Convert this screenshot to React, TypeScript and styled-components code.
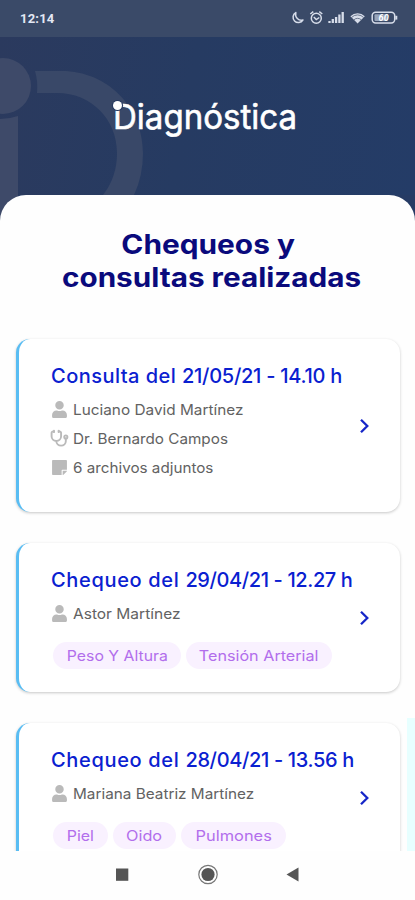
import React from "react";
import styled, { createGlobalStyle } from "styled-components";
import { FaUser, FaStickyNote } from "react-icons/fa";
import { Stethoscope } from "lucide-react";

const GlobalStyle = createGlobalStyle`
  * { box-sizing: border-box; }
  body { margin: 0; background: #fff; font-family: Inter, "Liberation Sans", sans-serif; }
`;

const Screen = styled.div`
  width: 415px;
  height: 900px;
  display: flex;
  flex-direction: column;
  overflow: hidden;
  background: #263b64;
`;

const StatusBar = styled.header`
  flex: none;
  height: 37px;
  padding: 0 17px 1px 20px;
  display: flex;
  align-items: center;
  justify-content: space-between;
  background: #3a4a68;
  color: #e3e8f4;
  font: 700 13px Roboto, sans-serif;
  letter-spacing: 0.2px;
`;

const Hero = styled.div`
  position: relative;
  flex: none;
  height: 158px;
  display: flex;
  justify-content: center;
  padding: 58px 7px 0 0;
  background: linear-gradient(100deg, #2b3a5e 0%, #263b62 45%, #243c67 100%);
`;

const Watermark = styled.svg`
  position: absolute;
  left: 0;
  top: 0;
`;

const Brand = styled.div`
  position: relative;
  width: 183px;
  height: 44px;
`;

const BrandName = styled.div`
  font-size: 34px;
  line-height: 44px;
  font-weight: 400;
  color: #fff;
  -webkit-text-stroke: 0.6px #fff;
  white-space: nowrap;
  transform: scaleX(0.972);
  transform-origin: left;
`;

const BrandDot = styled.i`
  position: absolute;
  left: 0;
  top: 6px;
  width: 9px;
  height: 9px;
  border-radius: 50%;
  background: #fff;
  box-shadow: 0 0 0 1.1px #273b61;
`;

const SheetBack = styled.div`
  flex: 1;
  min-height: 0;
  display: flex;
  flex-direction: column;
  background: linear-gradient(90deg, #3e4a69 0 18px, #263b64 18px);
`;

const Sheet = styled.main`
  position: relative;
  flex: 1;
  min-height: 0;
  overflow: hidden;
  padding: 33px 15px 0 16px;
  border-radius: 26px 26px 0 0;
  background: #fefefe;
`;

const Heading = styled.h1`
  margin: 0 0 46px;
  display: flex;
  flex-direction: column;
  align-items: center;
  color: #0a0a7c;
  font-size: 26.5px;
  font-weight: 700;
  line-height: 32.5px;
`;

const HeadingLine = styled.span<{ $indent?: number }>`
  padding-left: ${(p) => p.$indent ?? 0}px;
`;

const Stretch = styled.span<{ $x: number; $center?: boolean }>`
  display: inline-block;
  white-space: nowrap;
  transform: scaleX(${(p) => p.$x});
  transform-origin: ${(p) => (p.$center ? "center" : "left")};
`;

const Card = styled.article<{ $h: number }>`
  position: relative;
  height: ${(p) => p.$h}px;
  margin-bottom: 31px;
  padding: 24px 28px 0 32px;
  display: flex;
  justify-content: space-between;
  border-left: 3px solid #59bdf3;
  border-radius: 14px;
  background: #fff;
  box-shadow: 0 1px 3px rgba(0, 0, 0, 0.22);
`;

const CardTitle = styled.h2`
  margin: 0 0 8px;
  height: 26px;
  line-height: 26px;
  color: #0a20d0;
  font-size: 20px;
  font-weight: 500;
  white-space: pre;
`;

const Tracked = styled.span<{ $tracking: number }>`
  letter-spacing: ${(p) => p.$tracking}px;
`;

const Info = styled.div`
  display: flex;
  align-items: center;
  gap: 5px;
  height: 28.8px;
  margin-top: -1.5px;
  margin-bottom: 1.5px;
  color: #626262;
  font-size: 14.5px;
  svg { flex: none; width: 17px; height: 17px; color: #bababa; }
  .lucide { width: 19px; height: 19px; margin: 0 -1px; stroke-width: 2.4px; }
`;

const Tags = styled.div`
  display: flex;
  gap: 5px;
  margin: 13.5px 0 0 2px;
`;

const Tag = styled.span<{ $w: number }>`
  width: ${(p) => p.$w}px;
  height: 27px;
  line-height: 27px;
  text-align: center;
  border-radius: 14px;
  background: #f9f1ff;
  color: #b26eec;
  font-size: 14.5px;
`;

const Arrow = styled.svg<{ $top: number }>`
  flex: none;
  width: 12px;
  height: 16px;
  margin: ${(p) => p.$top}px 1px 0 0;
`;

const SideTab = styled.i`
  position: absolute;
  right: 0;
  top: 523px;
  width: 8px;
  height: 140px;
  background: #e7ffff;
`;

const NavBar = styled.nav`
  flex: none;
  height: 49px;
  background: #fefefe;
`;

type Label = { text: string; x: number };
type TagData = Label & { w: number };
type Row = Label & { icon: "user" | "doctor" | "note" };
type Title = { kind: string; kindTracking: number; date: string; dateTracking: number };
type Visit = { title: Title; height: number; arrow: number; rows: Row[]; tags?: TagData[] };

const icons = { user: FaUser, doctor: Stethoscope, note: FaStickyNote };

const visits: Visit[] = [
  {
    title: { kind: "Consulta del ", kindTracking: 0.46, date: "21/05/21 - 14.10 h", dateTracking: -0.27 },
    height: 173,
    arrow: 55,
    rows: [
      { icon: "user", text: "Luciano David Martínez", x: 1.058 },
      { icon: "doctor", text: "Dr. Bernardo Campos", x: 1.053 },
      { icon: "note", text: "6 archivos adjuntos", x: 1.05 },
    ],
  },
  {
    title: { kind: "Chequeo del ", kindTracking: 0.66, date: "29/04/21 - 12.27 h", dateTracking: -0.39 },
    height: 149,
    arrow: 43,
    rows: [{ icon: "user", text: "Astor Martínez", x: 1.07 }],
    tags: [
      { text: "Peso Y Altura", w: 128, x: 1.09 },
      { text: "Tensión Arterial", w: 146, x: 1.115 },
    ],
  },
  {
    title: { kind: "Chequeo del ", kindTracking: 0.66, date: "28/04/21 - 13.56 h", dateTracking: -0.35 },
    height: 149,
    arrow: 43,
    rows: [{ icon: "user", text: "Mariana Beatriz Martínez", x: 1.056 }],
    tags: [
      { text: "Piel", w: 55, x: 1.1 },
      { text: "Oido", w: 63, x: 1.12 },
      { text: "Pulmones", w: 105, x: 1.13 },
    ],
  },
];

function StatusIcons() {
  return (
    <svg width="110" height="18" viewBox="288 9 110 18" fill="none" stroke="#d7ddea" strokeWidth="1.5">
      <path d="M295.8 12.6A5.3 5.3 0 1 0 302.9 20C298.6 21.1 294.6 17.2 295.8 12.6Z" strokeLinejoin="round" />
      <circle cx="316.3" cy="18.3" r="5" />
      <path d="m310.3 14 3-2.3m9 2.3-3-2.3M313.8 17l2.5 2.5 3-2" />
      <path d="M329.5 23v-2M332.8 23v-4M336.1 23v-6M339.4 23v-8.5M342.7 23V12" strokeWidth="2.3" />
      <path d="M350.4 16.2a10.5 10.5 0 0 1 14.4 0L357.6 23.5Z" fill="#d7ddea" stroke="none" />
      <path d="M351.5 17.5a8.5 8.5 0 0 1 12.2 0M353.8 19.9a5.4 5.4 0 0 1 7.6 0" stroke="#526079" strokeWidth=".8" />
      <rect x="372.2" y="12.2" width="22.5" height="10.8" rx="3.4" />
      <path d="M396.3 15.8v3.8" strokeWidth="2" />
      <rect x="374.5" y="14.3" width="13" height="6.6" rx="1" fill="#98a4b9" stroke="none" />
      <text x="378.5" y="21" fill="#fff" stroke="none" fontFamily="Roboto, sans-serif" fontSize="9" fontWeight="700" fontStyle="italic">60</text>
    </svg>
  );
}

function HeroMark() {
  return (
    <Watermark width="160" height="158" viewBox="0 37 160 158">
      <circle cx="3" cy="86" r="28" fill="#3e4a69" />
      <path d="M0 119Q9 119 18 116V195H0Z" fill="#3e4a69" />
      <path d="M35 71H62C107 71 143 107 143 153Q143 176 134 195H103Q117 177 117 153C117 119 91 93 57 93H37Q38 81 35 71Z" fill="#394868" />
    </Watermark>
  );
}

function NavIcons() {
  return (
    <svg width="415" height="49" viewBox="0 851 415 49">
      <rect x="116" y="868.5" width="12.3" height="12.3" fill="#555" />
      <circle cx="208" cy="874.5" r="9.2" fill="none" stroke="#777" strokeWidth="1.2" />
      <circle cx="208" cy="874.5" r="6.6" fill="#555" />
      <path d="M286.5 874.5 298.5 867.5V881.5Z" fill="#555" />
    </svg>
  );
}

function VisitCard({ visit }: { visit: Visit }) {
  return (
    <Card $h={visit.height}>
      <div>
        <CardTitle>
          <Tracked $tracking={visit.title.kindTracking}>{visit.title.kind}</Tracked>
          <Tracked $tracking={visit.title.dateTracking}>{visit.title.date}</Tracked>
        </CardTitle>
        {visit.rows.map((row) => {
          const Icon = icons[row.icon];
          return (
            <Info key={row.text}>
              <Icon />
              <Stretch $x={row.x}>{row.text}</Stretch>
            </Info>
          );
        })}
        {visit.tags && (
          <Tags>
            {visit.tags.map((tag) => (
              <Tag key={tag.text} $w={tag.w}>
                <Stretch $x={tag.x} $center>{tag.text}</Stretch>
              </Tag>
            ))}
          </Tags>
        )}
      </div>
      <Arrow $top={visit.arrow} viewBox="0 0 12 16" fill="none" stroke="#1626c8" strokeWidth="2.3">
        <path d="M2 1.8 8.3 8 2 14.2" />
      </Arrow>
    </Card>
  );
}

export default function App() {
  return (
    <>
      <GlobalStyle />
      <Screen>
        <StatusBar>
          <span>12:14</span>
          <StatusIcons />
        </StatusBar>
        <Hero>
          <HeroMark />
          <Brand>
            <BrandName>Diagnóstica</BrandName>
            <BrandDot />
          </Brand>
        </Hero>
        <SheetBack>
          <Sheet>
            <Heading>
              <HeadingLine>
                <Stretch $x={1.125} $center>Chequeos y</Stretch>
              </HeadingLine>
              <HeadingLine $indent={7}>
                <Stretch $x={1.12} $center>consultas realizadas</Stretch>
              </HeadingLine>
            </Heading>
            {visits.map((visit) => (
              <VisitCard key={visit.title.date} visit={visit} />
            ))}
            <SideTab />
          </Sheet>
        </SheetBack>
        <NavBar>
          <NavIcons />
        </NavBar>
      </Screen>
    </>
  );
}
